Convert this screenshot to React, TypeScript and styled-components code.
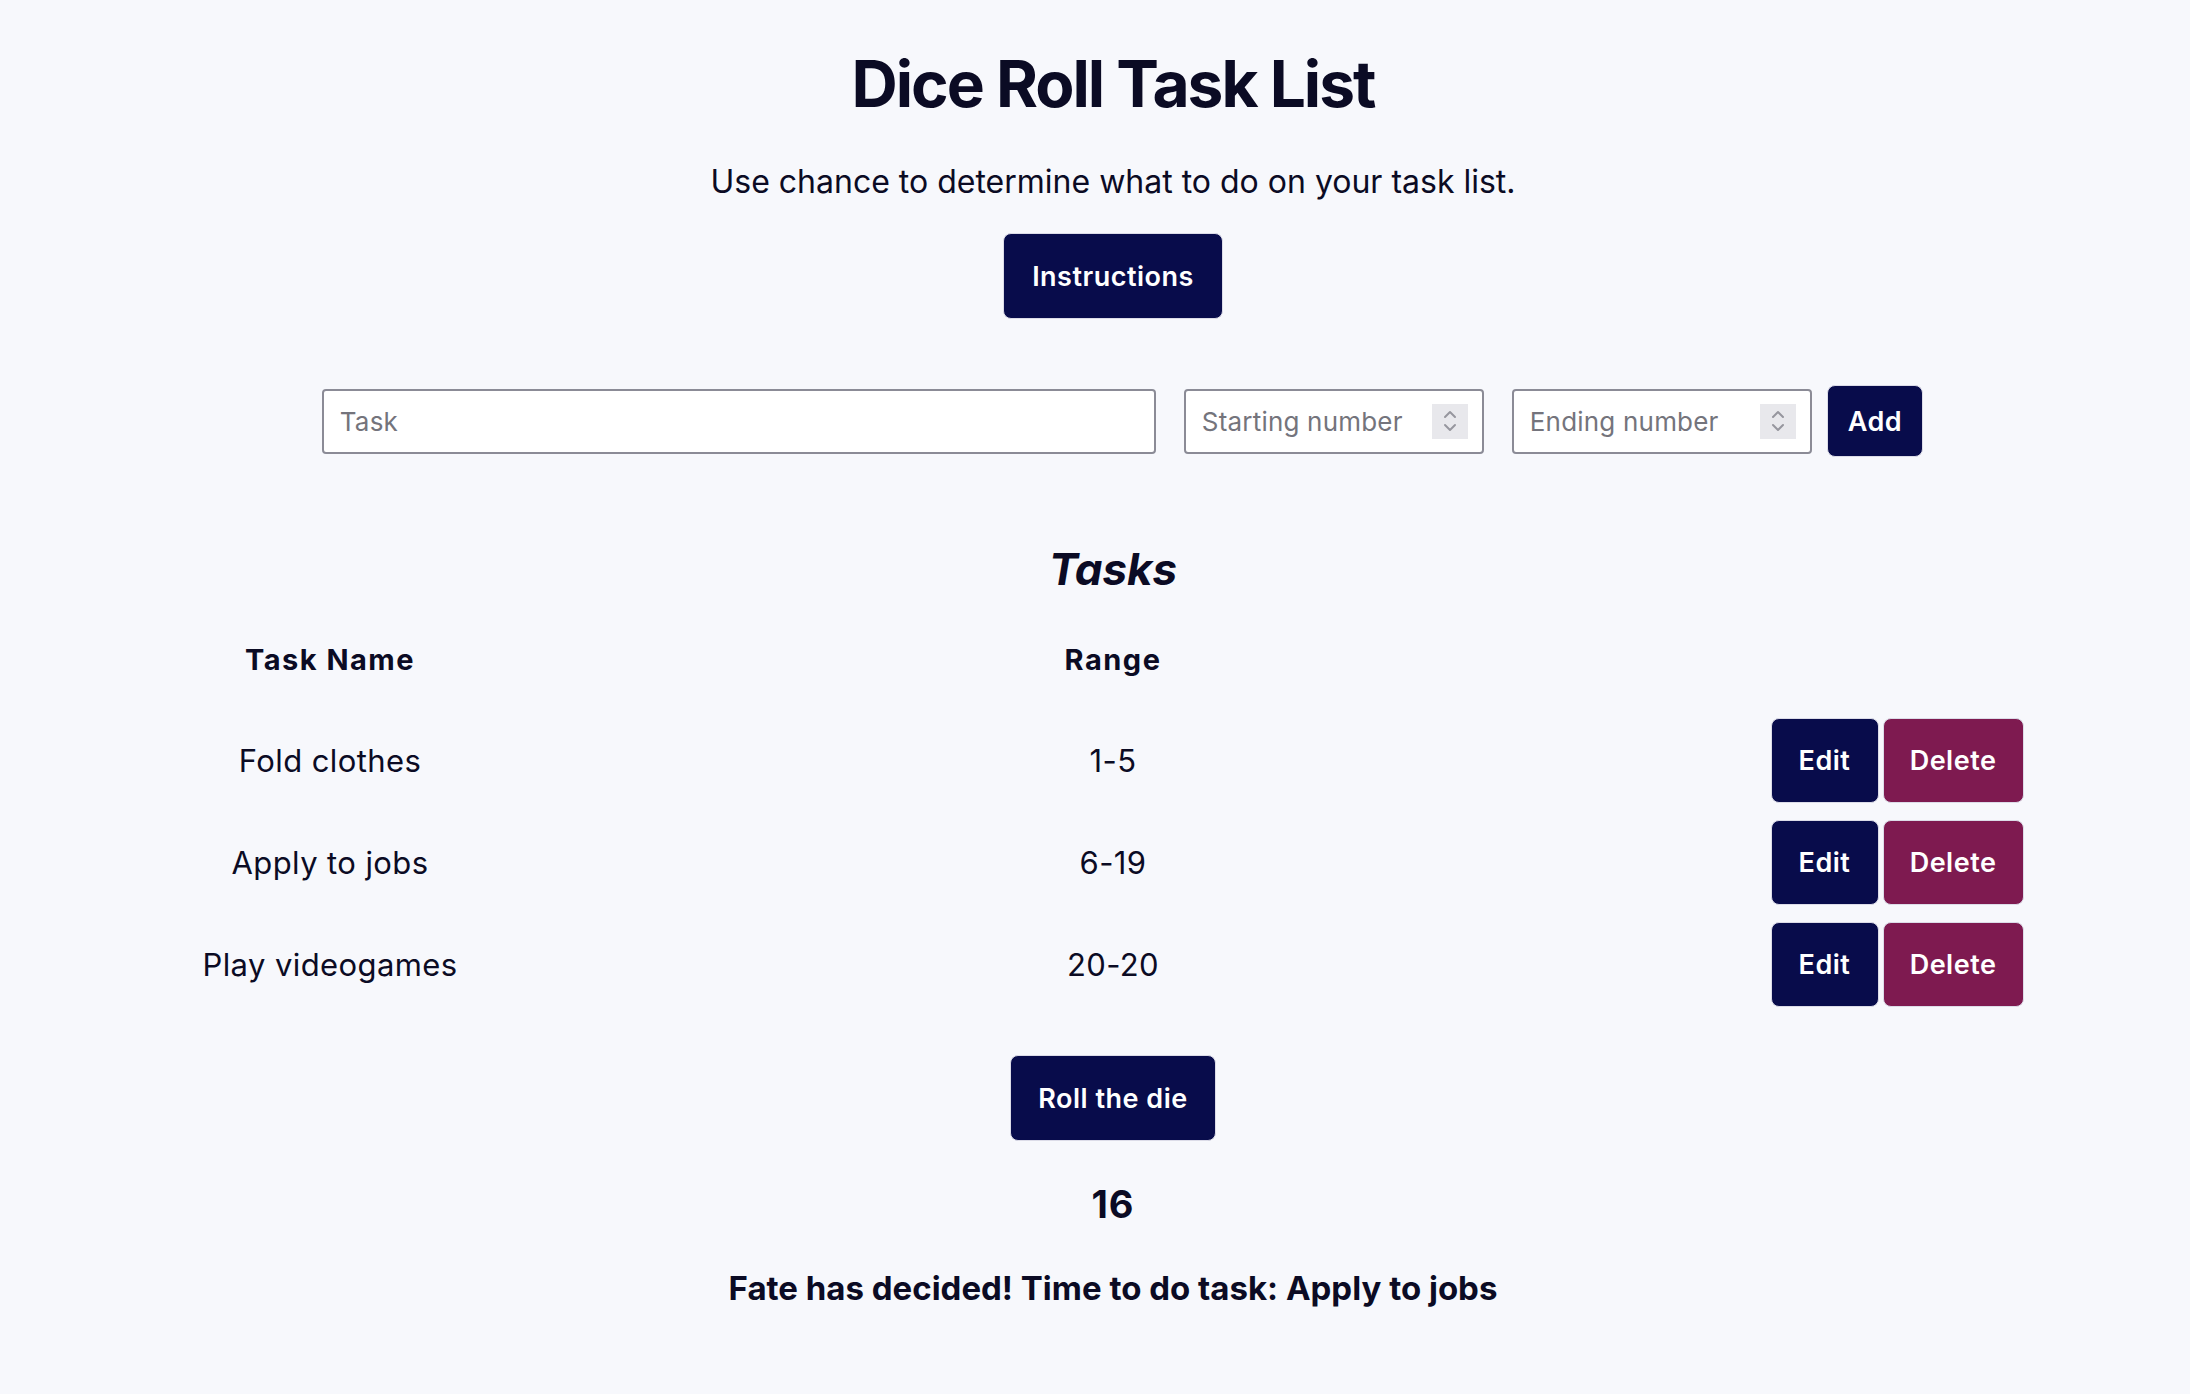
import React from "react";
import styled, { createGlobalStyle } from "styled-components";

const GlobalStyle = createGlobalStyle`
  html, body {
    margin: 0;
    padding: 0;
    background: #f7f8fc;
  }
  body {
    font-family: Inter, "Noto Sans", sans-serif;
    color: #0b0b24;
  }
  * { box-sizing: border-box; }
`;

const Page = styled.main`
  width: 2190px;
  min-height: 1394px;
  padding: 0 0 0 36px;
  display: flex;
  flex-direction: column;
  align-items: center;
`;

const Title = styled.h1`
  margin: 44px 0 0;
  font-size: 64px;
  line-height: 80px;
  font-weight: 700;
  letter-spacing: -2px;
`;

const Subtitle = styled.p`
  margin: 39px 0 0;
  font-size: 32px;
  line-height: 38px;
  font-weight: 400;
`;

const Button = styled.button<{ $variant?: "primary" | "danger"; $w?: number; $h?: number }>`
  font-family: Inter, "Noto Sans", sans-serif;
  font-weight: 600;
  font-size: 27px;
  letter-spacing: 0.5px;
  color: #ffffff;
  background: ${(p) => (p.$variant === "danger" ? "#7e1a50" : "#080c4b")};
  border: 1px solid #dcdce8;
  border-radius: 8px;
  height: ${(p) => p.$h ?? 86}px;
  width: ${(p) => (p.$w ? `${p.$w}px` : "auto")};
  padding: 0 28px;
  display: inline-flex;
  align-items: center;
  justify-content: center;
  cursor: pointer;
`;

const InstructionsButton = styled(Button)`
  margin-top: 32px;
`;

const InputRow = styled.form`
  margin-top: 66px;
  display: flex;
  align-items: center;
  padding-left: 19px;
`;

const TextInput = styled.input`
  width: 834px;
  height: 65px;
  border: 2px solid #8b8b96;
  border-radius: 4px;
  background: #ffffff;
  padding: 0 16px;
  font-family: Inter, "Noto Sans", sans-serif;
  font-size: 26px;
  letter-spacing: 0.2px;
  color: #0b0b24;
  margin-right: 28px;
  &::placeholder { color: #74747c; }
`;

const NumberBox = styled.label<{ $gap: number }>`
  width: 300px;
  height: 65px;
  border: 2px solid #8b8b96;
  border-radius: 4px;
  background: #ffffff;
  display: flex;
  align-items: center;
  padding: 0 14px 0 16px;
  margin-right: ${(p) => p.$gap}px;
`;

const NumberInput = styled.input`
  flex: 1;
  min-width: 0;
  border: none;
  outline: none;
  background: transparent;
  font-family: Inter, "Noto Sans", sans-serif;
  font-size: 26px;
  letter-spacing: 0.2px;
  color: #0b0b24;
  padding: 0;
  &::placeholder { color: #74747c; }
`;

const Spinner = styled.span`
  width: 36px;
  height: 35px;
  background: #e8e8ec;
  display: flex;
  align-items: center;
  justify-content: center;
`;

const AddButton = styled(Button)`
  height: 72px;
  padding: 0 20px;
`;

const TasksTitle = styled.h2`
  margin: 84px 0 0;
  font-size: 44px;
  line-height: 56px;
  font-style: italic;
  font-weight: 700;
`;

const Table = styled.div`
  width: 100%;
  margin-top: 43px;
  display: grid;
  grid-template-columns: 588px 1fr 588px;
  row-gap: 17px;
  align-items: center;
`;

const HeadCell = styled.div`
  text-align: center;
  font-size: 29px;
  line-height: 40px;
  font-weight: 700;
  letter-spacing: 1.5px;
  margin-bottom: 21px;
`;

const Cell = styled.div`
  text-align: center;
  font-size: 31px;
  line-height: 40px;
  font-weight: 400;
  letter-spacing: 0.4px;
`;

const Actions = styled.div`
  display: flex;
  justify-content: center;
  gap: 4px;
  padding-left: 2px;
`;

const RollButton = styled(Button)`
  margin-top: 48px;
  padding: 0 27px;
`;

const Result = styled.div`
  margin-top: 41px;
  font-size: 38px;
  line-height: 44px;
  font-weight: 700;
  letter-spacing: 1px;
`;

const Verdict = styled.p`
  margin: 42px 0 0;
  font-size: 33px;
  line-height: 40px;
  font-weight: 700;
`;

const Chevrons = () => (
  <svg width="16" height="26" viewBox="0 0 16 26" fill="none" stroke="#96969e" strokeWidth="2" strokeLinecap="round" strokeLinejoin="round">
    <polyline points="3,9 8,4 13,9" />
    <polyline points="3,17 8,22 13,17" />
  </svg>
);

const tasks = [
  { name: "Fold clothes", range: "1-5" },
  { name: "Apply to jobs", range: "6-19" },
  { name: "Play videogames", range: "20-20" },
];

export default function App() {
  return (
    <>
      <GlobalStyle />
      <Page>
        <Title>Dice Roll Task List</Title>
        <Subtitle>Use chance to determine what to do on your task list.</Subtitle>
        <InstructionsButton type="button">Instructions</InstructionsButton>

        <InputRow onSubmit={(e) => e.preventDefault()}>
          <TextInput placeholder="Task" />
          <NumberBox $gap={28}>
            <NumberInput placeholder="Starting number" />
            <Spinner><Chevrons /></Spinner>
          </NumberBox>
          <NumberBox $gap={15}>
            <NumberInput placeholder="Ending number" />
            <Spinner><Chevrons /></Spinner>
          </NumberBox>
          <AddButton type="submit">Add</AddButton>
        </InputRow>

        <TasksTitle>Tasks</TasksTitle>
        <Table>
          <HeadCell>Task Name</HeadCell>
          <HeadCell>Range</HeadCell>
          <HeadCell />
          {tasks.map((t) => (
            <React.Fragment key={t.name}>
              <Cell>{t.name}</Cell>
              <Cell>{t.range}</Cell>
              <Actions>
                <Button type="button" $w={108} $h={85}>Edit</Button>
                <Button type="button" $variant="danger" $w={141} $h={85}>Delete</Button>
              </Actions>
            </React.Fragment>
          ))}
        </Table>

        <RollButton type="button">Roll the die</RollButton>
        <Result>16</Result>
        <Verdict>Fate has decided! Time to do task: Apply to jobs</Verdict>
      </Page>
    </>
  );
}
